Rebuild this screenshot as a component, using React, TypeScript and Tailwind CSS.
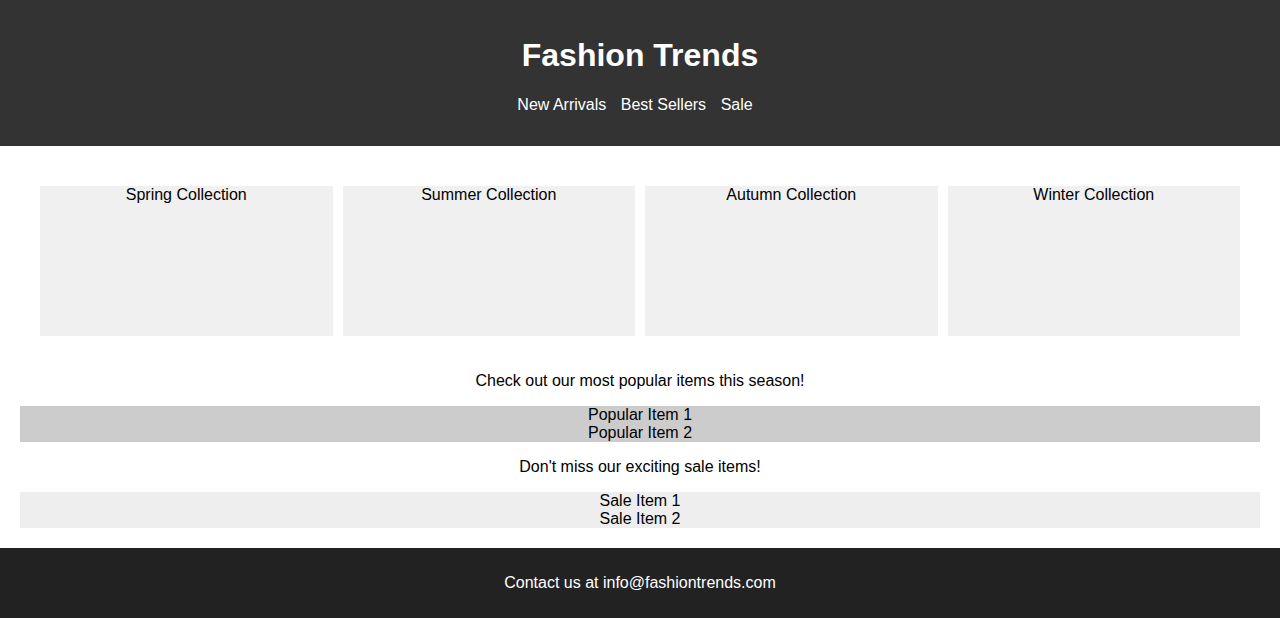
import React from 'react';

const COLLECTIONS = ['Spring Collection', 'Summer Collection', 'Autumn Collection', 'Winter Collection'];
const NAV = ['New Arrivals', 'Best Sellers', 'Sale'];

export default function App() {
  return (
    <div className="min-h-screen bg-white text-black font-['Liberation_Sans',Arial,sans-serif] text-base leading-[normal]">
      {/* Header */}
      <header className="bg-[#333] text-white text-center py-4">
        <h1 className="text-[32px] leading-[normal] font-bold my-[21.44px]">Fashion Trends</h1>
        <nav className="mt-[21.44px] mb-4">
          <ul className="flex justify-center gap-[14.5px] pr-[10px]">
            {NAV.map((item) => (
              <li key={item}>{item}</li>
            ))}
          </ul>
        </nav>
      </header>

      <main className="p-5">
        {/* Collections */}
        <section className="p-5 grid grid-cols-4 gap-[10px]">
          {COLLECTIONS.map((c) => (
            <div key={c} className="h-[150px] bg-[#f0f0f0] text-center">
              {c}
            </div>
          ))}
        </section>

        {/* Popular */}
        <p className="text-center my-4">Check out our most popular items this season!</p>
        <ul className="bg-[#ccc] text-center">
          <li>Popular Item 1</li>
          <li>Popular Item 2</li>
        </ul>

        {/* Sale */}
        <p className="text-center my-4">Don't miss our exciting sale items!</p>
        <ul className="bg-[#eee] text-center">
          <li>Sale Item 1</li>
          <li>Sale Item 2</li>
        </ul>
      </main>

      <footer className="bg-[#222] text-white text-center py-[10px]">
        <p className="my-4">Contact us at info@fashiontrends.com</p>
      </footer>
    </div>
  );
}
